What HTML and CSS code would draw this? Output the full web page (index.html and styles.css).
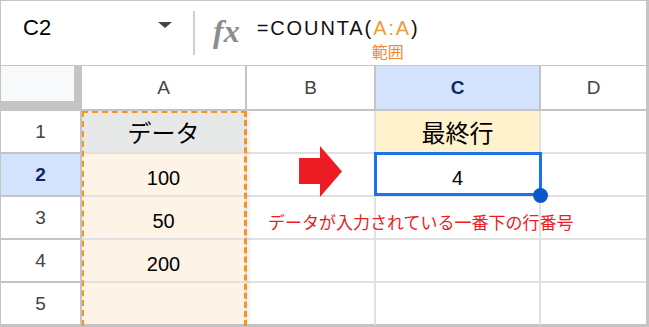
FILE: index.html
```html
<!DOCTYPE html>
<html lang="ja">
<head>
    <meta charset="UTF-8">
    <meta name="viewport" content="width=device-width, initial-scale=1.0">
    <title>COUNTA 最終行</title>
    <link rel="stylesheet" href="styles.css">
</head>
<body>
    <div class="sheet-window">
        <!-- Formula bar -->
        <div class="formula-bar">
            <div class="name-box">
                <span class="cell-ref">C2</span>
                <span class="caret"></span>
            </div>
            <div class="divider"></div>
            <div class="fx">fx</div>
            <div class="formula">
                <div class="formula-text">=COUNTA(<span class="ref">A:A</span>)</div>
                <div class="range-label">範囲</div>
            </div>
        </div>

        <!-- Sheet grid -->
        <div class="grid">
            <div class="corner"></div>
            <div class="col-head">A</div>
            <div class="col-head">B</div>
            <div class="col-head active">C</div>
            <div class="col-head last">D</div>

            <div class="row-head">1</div>
            <div class="cell data-head">データ</div>
            <div class="cell"></div>
            <div class="cell result-head">最終行</div>
            <div class="cell last"></div>

            <div class="row-head active">2</div>
            <div class="cell data num">100</div>
            <div class="cell"></div>
            <div class="cell num">4</div>
            <div class="cell last"></div>

            <div class="row-head">3</div>
            <div class="cell data num">50</div>
            <div class="cell note-cell"><span class="note">データが入力されている一番下の行番号</span></div>
            <div class="cell"></div>
            <div class="cell last"></div>

            <div class="row-head">4</div>
            <div class="cell data num">200</div>
            <div class="cell"></div>
            <div class="cell"></div>
            <div class="cell last"></div>

            <div class="row-head bottom">5</div>
            <div class="cell data bottom"></div>
            <div class="cell bottom"></div>
            <div class="cell bottom"></div>
            <div class="cell last bottom"></div>

            <!-- overlays -->
            <div class="range-outline"></div>
            <svg class="arrow" viewBox="0 0 43 51">
                <polygon points="0,12 21,12 21,0 43,25.5 21,51 21,38 0,38" fill="#ed1c24"/>
            </svg>
            <div class="selection"></div>
        </div>
    </div>
</body>
</html>
```

FILE: styles.css
```css
body {
    margin: 0;
    font-family: "Liberation Sans", Arial, sans-serif;
    background-color: #fff;
}
.sheet-window {
    width: 649px;
    height: 327px;
    box-sizing: border-box;
    border: 1px solid #c4c4c4;
    border-right-width: 3px;
    overflow: hidden;
}

/* formula bar */
.formula-bar {
    display: flex;
    height: 64px;
    border-bottom: 1px solid #c4c4c4;
}
.name-box {
    width: 192px;
    box-sizing: border-box;
    display: flex;
    justify-content: space-between;
    align-items: flex-start;
    padding: 13px 21px 0 22px;
}
.cell-ref {
    font-size: 22px;
    line-height: 28px;
    color: #000;
}
.caret {
    width: 0;
    height: 0;
    border-left: 7px solid transparent;
    border-right: 7px solid transparent;
    border-top: 6px solid #444;
    margin-top: 8px;
}
.divider {
    width: 2px;
    background-color: #d0d0d0;
    margin: 10px 0;
}
.fx {
    margin-left: 18px;
    padding-top: 14px;
    font-family: "Liberation Serif", serif;
    font-style: italic;
    font-weight: bold;
    font-size: 32px;
    line-height: 1;
    color: #8c8c8c;
}
.formula {
    margin-left: 17px;
    padding-top: 13px;
}
.formula-text {
    font-size: 20px;
    line-height: 28px;
    letter-spacing: 1.9px;
    color: #111;
}
.ref {
    color: #f29a38;
}
.range-label {
    margin-left: 115px;
    font-family: "Noto Sans CJK JP", sans-serif;
    font-size: 16px;
    line-height: 18px;
    color: #f0883a;
}

/* grid */
.grid {
    position: relative;
    display: grid;
    grid-template-columns: 81px 165px 129px 165px 1fr;
    grid-template-rows: 45px repeat(5, 43px);
}
.grid > div {
    box-sizing: border-box;
}
.corner {
    background-color: #f8f9fa;
    border-right: 8px solid #c4c4c4;
    border-bottom: 10px solid #c4c4c4;
}
.col-head,
.row-head {
    display: flex;
    align-items: center;
    justify-content: center;
    border-right: 2px solid #c4c4c4;
    border-bottom: 2px solid #c4c4c4;
    font-size: 19px;
    color: #444;
}
.active {
    background-color: #d3e3fd;
    color: #0b2a5c;
    font-weight: bold;
}
.cell {
    display: flex;
    align-items: center;
    justify-content: center;
    border-right: 2px solid #e1e1e1;
    border-bottom: 2px solid #e1e1e1;
    font-size: 20px;
    color: #000;
}
.last {
    border-right: none;
}
.bottom {
    border-bottom-color: #c4c4c4;
}
.num {
    padding-top: 8px;
}
.data {
    background-color: #fdf3e7;
}
.data-head,
.result-head {
    font-family: "Noto Sans CJK JP", sans-serif;
    font-size: 24px;
}
.data-head {
    background-color: #e7e9e9;
}
.result-head {
    background-color: #fff2cc;
}
.note-cell {
    justify-content: flex-start;
    padding: 8px 0 0 21px;
    white-space: nowrap;
}
.note {
    font-family: "Noto Sans CJK JP", sans-serif;
    font-size: 17px;
    color: #ec1c24;
}

/* overlays */
.range-outline {
    position: absolute;
    grid-column: 2 / 3;
    grid-row: 2 / 7;
    inset: 0;
    border: 2px dashed #f7941d;
    border-right-width: 3px;
    border-bottom: none;
    box-shadow: 4px 0 4px -2px rgba(0,0,0,0.08);
    pointer-events: none;
}
.arrow {
    position: absolute;
    grid-column: 3 / 4;
    grid-row: 3 / 4;
    left: 52px;
    top: -8px;
    width: 43px;
    height: 51px;
}
.selection {
    position: absolute;
    grid-column: 4 / 5;
    grid-row: 3 / 4;
    top: -2px;
    left: -2px;
    right: -1px;
    bottom: 1px;
    border: 3px solid #1a73e8;
}
.selection::after {
    content: "";
    position: absolute;
    right: -9px;
    bottom: -10px;
    width: 15px;
    height: 15px;
    border-radius: 50%;
    background-color: #0b57d0;
}
```
